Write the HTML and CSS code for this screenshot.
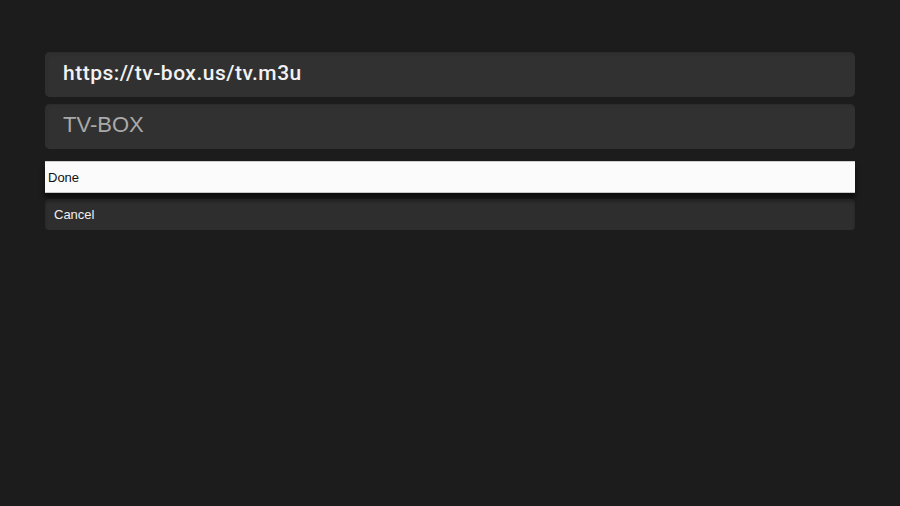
FILE: index.html
```html
<!DOCTYPE html>
<html>
<head>
<meta charset="utf-8">
<link rel="stylesheet" href="styles.css">
</head>
<body>
<main class="dialog">
  <div class="field field-url"><span class="value">https://tv-box.us/tv.m3u</span></div>
  <div class="field field-name"><span class="placeholder">TV-BOX</span></div>
  <div class="actions">
    <div class="btn btn-done">Done</div>
    <div class="btn btn-cancel">Cancel</div>
  </div>
</main>
</body>
</html>
```

FILE: styles.css
```css
html, body {
  margin: 0;
  padding: 0;
  background: #1c1c1c;
  width: 900px;
  height: 506px;
  overflow: hidden;
  font-family: "Liberation Sans", Arial, sans-serif;
}
.dialog {
  padding: 52px 45px 0 45px;
  display: flex;
  flex-direction: column;
}
.field {
  height: 45px;
  border-radius: 5px;
  background: #313131;
  box-shadow: inset 0 1px 0 #2b2b2b, inset 4px 4px 0 #2f2f2f;
  display: flex;
  align-items: center;
  padding-left: 18px;
  box-sizing: border-box;
  margin-bottom: 7px;
}
.field-name { margin-bottom: 12px; }
.value {
  color: #f2f2f2;
  font-size: 21px;
  font-weight: 500;
  font-family: Roboto, "Liberation Sans", sans-serif;
  letter-spacing: 0.5px;
  margin-top: -3px;
}
.placeholder {
  color: #a9a9a9;
  font-size: 22px;
  font-family: "Liberation Sans", Arial, sans-serif;
  margin-top: -3px;
}
.actions {
  display: flex;
  flex-direction: column;
  gap: 6px;
}
.btn {
  font-size: 13px;
  display: flex;
  align-items: center;
  box-sizing: border-box;
}
.btn-done {
  height: 32px;
  background: #fbfbfb;
  color: #111;
  border-top: 1px solid #cfcfcf;
  border-bottom: 1px solid #c8c8c8;
  padding-left: 3px;
  box-shadow: 0 5px 5px rgba(0,0,0,0.55);
}
.btn-cancel {
  height: 31px;
  background: #2e2e2e;
  color: #f0f0f0;
  border-radius: 4px;
  padding-left: 9px;
  box-shadow: inset 0 3px 3px rgba(0,0,0,0.25);
}
```
